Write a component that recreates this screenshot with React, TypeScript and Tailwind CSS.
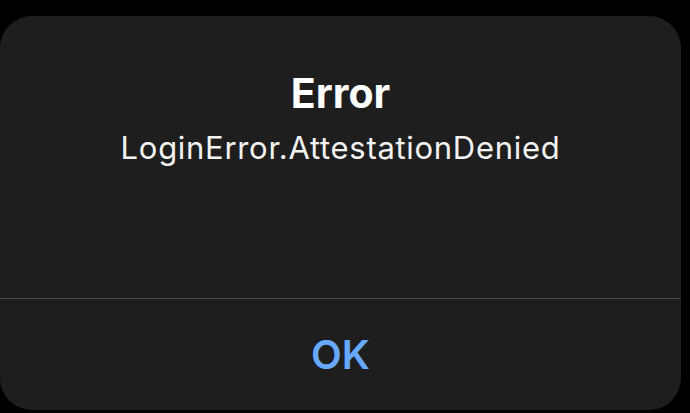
import React from "react";

export default function App() {
  return (
    <div className="w-[690px] h-[413px] bg-black pt-4 overflow-hidden" style={{ fontFamily: "Inter, 'Liberation Sans', sans-serif" }}>
      <div className="w-[681px] h-[394px] rounded-[32px] bg-[#1e1e1e] flex flex-col">
        <div className="h-[282px] flex flex-col items-center pt-[53px]">
          <div className="text-[41px] leading-[48px] font-bold text-white">Error</div>
          <div className="mt-[13px] text-[31px] leading-[36px] tracking-[0.7px] text-[#f2f2f2]">LoginError.AttestationDenied</div>
        </div>
        <div className="h-px bg-[#4a4a4c]" />
        <div className="flex-1 flex items-center justify-center">
          <span className="text-[40px] leading-[48px] font-semibold text-[#66a9ff]">OK</span>
        </div>
      </div>
    </div>
  );
}
